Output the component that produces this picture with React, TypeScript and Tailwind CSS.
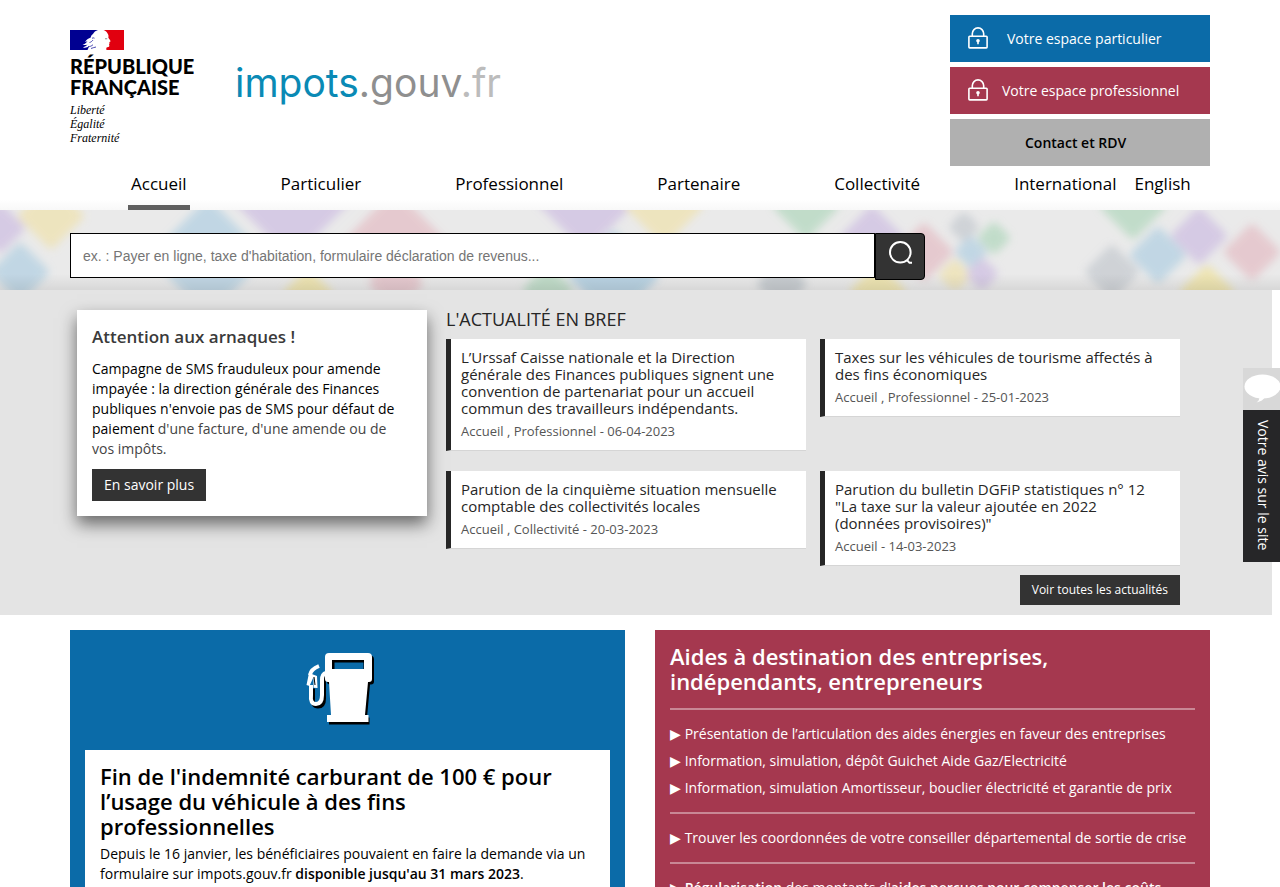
import React from "react";

const navItems = ["Accueil", "Particulier", "Professionnel", "Partenaire", "Collectivité", "International"];

type News = { title: string; meta: string };

const news: News[] = [
  {
    title:
      "L’Urssaf Caisse nationale et la Direction générale des Finances publiques signent une convention de partenariat pour un accueil commun des travailleurs indépendants.",
    meta: "Accueil , Professionnel - 06-04-2023",
  },
  {
    title: "Taxes sur les véhicules de tourisme affectés à des fins économiques",
    meta: "Accueil , Professionnel - 25-01-2023",
  },
  {
    title: "Parution de la cinquième situation mensuelle comptable des collectivités locales",
    meta: "Accueil , Collectivité - 20-03-2023",
  },
  {
    title: 'Parution du bulletin DGFiP statistiques n° 12 "La taxe sur la valeur ajoutée en 2022 (données provisoires)"',
    meta: "Accueil - 14-03-2023",
  },
];

// Soft squares behind the search bar: [cx, cy, half diagonal, colour]
const diamonds: [number, number, number, string][] = [
  [0, 18, 20, "#cfc0e2"],
  [51, 6, 28, "#efe2b0"],
  [20, 62, 24, "#b4d0e2"],
  [208, 32, 38, "#b4d0e2"],
  [292, -12, 56, "#cfc0e2"],
  [395, 34, 48, "#e4bfc6"],
  [208, 62, 38, "#b4d0e2"],
  [308, 84, 20, "#efe2a0"],
  [396, 74, 22, "#e4bfc6"],
  [586, -8, 44, "#cfc0e2"],
  [664, -4, 34, "#efe2b0"],
  [806, -4, 28, "#b4d8bf"],
  [548, 80, 20, "#b4d8bf"],
  [614, 66, 40, "#a9cbe0"],
  [782, 74, 20, "#bcc2c8"],
  [872, 28, 27, "#cfc0e2"],
  [878, 82, 23, "#efe2a0"],
  [924, 42, 24, "#e4bfc6"],
  [964, 17, 10, "#c6cbd0"],
  [994, 28, 11, "#b4d8bf"],
  [971, 42, 11, "#b4d0e2"],
  [955, 65, 11, "#efe2b0"],
  [982, 64, 11, "#cfc0e2"],
  [1133, -4, 28, "#b4d8bf"],
  [1112, 62, 22, "#c6cbd0"],
  [1158, 45, 23, "#b4d0e2"],
  [1199, 26, 23, "#cfc0e2"],
  [1252, 42, 23, "#e4bfc6"],
  [1207, 82, 22, "#efe2a0"],
];

function Lock() {
  return (
    <svg viewBox="0 0 20 22" className="mb-[2px] h-[22px] w-5 shrink-0" fill="none" stroke="#fff" strokeWidth="1.6" aria-hidden="true">
      <rect x="0.9" y="9.3" width="18.2" height="11.6" rx="0.8" />
      <path d="M4.3 9V6.8a5.700 5.900 0 0 1 11.4 0V9" />
      <circle cx="10" cy="13.800" r="1.800" fill="#fff" stroke="none" />
      <path d="M10 14v3.200" />
    </svg>
  );
}

function Flag() {
  return (
    <svg viewBox="0 0 54 20" className="h-5 w-[54px]" aria-hidden="true">
      <path fill="#000091" d="M0 0H28C25.500 .8 24 2 23 4c-1.500 .8-2 2-2.300 3.500-2 .8-4 2-5.700 4.500l2.500-.8c-1.500 1.800-2.800 3-5 3.600 2 .5 3.500 .4 5-.2-1.300 1.500-2.600 2.300-4.500 2.800 2 .5 4 .2 6-.6L17.500 20H0z" />
      <path fill="#e1000f" d="M33.500 0H54v20H36.500c-.3-1.300-.4-2.100 .5-2.800 1.500 .1 2.500-.2 2.300-1.900l-.3-1.300 .8-.9-.7-.9 1.400-.8c.2-1-1.700-2.400-2.200-3.800.5-1.600.2-3.200-1-4.700-.8-1.200-2-2.200-3.800-2.900z" />
      <path fill="none" stroke="#000091" strokeWidth="0.7" d="M18 16.500c2 .2 3.500-.4 5-1.800M19.500 12.500c1.500-.3 2.500-1.300 3.500-2.400M21 18.500c1.500-.3 3-1.300 5-1.500M22 8.200c1-.4 1.800-.4 2.500 0" />
      <path fill="#777" d="M35 8.400h2.200v.8H35z" />
    </svg>
  );
}

function FuelPump() {
  return (
    <svg viewBox="0 0 100 100" className="h-[100px] w-[100px]" aria-hidden="true">
      <g transform="translate(2 2.500)" fill="#000" stroke="#000">
        <path stroke="none" d="M39 13h39q4 0 4 4v22q0 3-3 3h-1l-3 33h2.500v7H37v-7h4L39 42h-1q-3 0-3-3V17q0-4 4-4z" />
        <path fill="none" strokeWidth="4" d="M36 34q-4 1-4 7v15q0 8-6 8t-5-8V46" />
      </g>
      <path fill="#fff" d="M39 13h39q4 0 4 4v22q0 3-3 3h-1l-3 33h3.500v7H37v-7h4L39 42h-1q-3 0-3-3V17q0-4 4-4z" />
      <path fill="#000" d="M42 20h32v9H42z" />
      <path fill="#0b6ba8" d="M44.500 22.500H73.500V29H44.500z" />
      <path fill="none" stroke="#fff" strokeWidth="4" d="M36 33q-4 1-4 7v15q0 9-6 9t-5-9V45" />
      <path fill="none" stroke="#fff" strokeWidth="4" d="M20 35q1-6 9-9" />
      <path fill="#fff" d="M19 33l8 3 .5 12-4-.3V37l-4 9-3-1z" />
      <path fill="none" stroke="#000" strokeWidth="1" d="M24 37l1 8" />
    </svg>
  );
}

function NewsCard({ title, meta }: News) {
  return (
    <article className="border-b border-l-[5px] border-b-[#d5d5d5] border-l-[#262626] bg-white py-[10px] pl-[10px] pr-5">
      <h3 className="text-[15px] leading-[17px]">
        <a href="#" className="text-[#262626]">{title}</a>
      </h3>
      <p className="mt-[5px] text-[13px] leading-[18px] text-[#555]">{meta}</p>
    </article>
  );
}

function AidLink({ children }: { children: React.ReactNode }) {
  return (
    <li className="leading-[27px]">
      <a href="#">▶ {children}</a>
    </li>
  );
}

export default function App() {
  return (
    <div className="h-screen overflow-x-hidden overflow-y-auto bg-white font-['Open_Sans',sans-serif] text-sm leading-5 text-black [scrollbar-width:none]">
      <header className="bg-linear-to-b from-white from-95% to-[#f8f8f8]">
        <div className="mx-auto flex max-w-[1140px] items-start">
          <a href="#" className="mt-[30px] block w-[165px]">
            <Flag />
            <span className="mt-[6px] block font-['Lato',sans-serif] text-[20px] font-black leading-[21px]">
              RÉPUBLIQUE
              <br />
              FRANÇAISE
            </span>
            <span className="mt-[5px] block font-['Liberation_Serif',serif] text-xs italic leading-[14px]">
              Liberté
              <br />
              Égalité
              <br />
              Fraternité
            </span>
          </a>
          <a href="#" className="mt-[56px] font-['Inter',sans-serif] text-[39px] font-normal leading-[54px] text-[#0a8ab5]">
            impots<span className="text-[#8f8f8f]">.gouv</span>
            <span className="text-[#bcbcbc]">.fr</span>
          </a>
          <div className="ml-auto mt-[15px] flex w-[260px] flex-col gap-[5px]">
            <a href="#" className="flex h-[47px] items-center gap-[19px] bg-[#0b6ba8] pl-[18px] text-white">
              <Lock />
              Votre espace particulier
            </a>
            <a href="#" className="flex h-[47px] items-center gap-[14px] bg-[#a5384f] pl-[18px] text-white">
              <Lock />
              Votre espace professionnel
            </a>
            <a href="#" className="flex h-[47px] items-center bg-[#b0b0b0] pl-[75px] font-semibold">
              Contact et RDV
            </a>
          </div>
        </div>
        <nav className="mx-auto flex h-[44px] max-w-[1140px] items-stretch pl-[58px] text-[17px] leading-9" aria-label="Navigation principale">
          <ul className="flex gap-[88px]">
            {navItems.map((item, i) => (
              <li key={item} className={i === 0 ? "border-b-[5px] border-[#606060] px-[3px]" : "px-[3px]"}>
                <a href="#">{item}</a>
              </li>
            ))}
          </ul>
          <a href="#" className="ml-[15px]">English</a>
        </nav>
      </header>

      <div className="relative h-20 overflow-hidden bg-[#eaeaea]">
        <svg className="absolute inset-0 h-full w-full" viewBox="0 0 1280 80" preserveAspectRatio="xMidYMid slice" aria-hidden="true">
          <defs>
            <filter id="soft" x="-20%" y="-20%" width="140%" height="140%">
              <feGaussianBlur stdDeviation="4" />
            </filter>
            <linearGradient id="shade" x1="0" y1="0" x2="0" y2="1">
              <stop offset="0.8" stopColor="#000" stopOpacity="0" />
              <stop offset="1" stopColor="#000" stopOpacity="0.08" />
            </linearGradient>
          </defs>
          <g filter="url(#soft)" opacity="0.75">
            {diamonds.map(([x, y, r, color]) => (
              <path
                key={`${x}-${y}`}
                d={`M${x} ${y - r}L${x + r} ${y}L${x} ${y + r}L${x - r} ${y}Z`}
                fill={color}
                stroke={color}
                strokeWidth="9"
                strokeLinejoin="round"
              />
            ))}
          </g>
          <rect width="1280" height="80" fill="url(#shade)" />
        </svg>
        <div className="relative mx-auto max-w-[1140px] pt-[23px]">
          <form className="flex w-3/4 items-start" onSubmit={(e) => e.preventDefault()}>
            <input
              type="search"
              aria-label="Rechercher"
              placeholder="ex. : Payer en ligne, taxe d'habitation, formulaire déclaration de revenus..."
              className="h-[45px] min-w-0 grow border border-black bg-white px-3 font-['Liberation_Sans',sans-serif] text-sm placeholder:text-[#757575]"
            />
            <button
              type="submit"
              aria-label="Lancer la recherche"
              className="flex h-[47px] w-[50px] shrink-0 justify-center rounded-r-[4px] border border-black bg-[#333] pt-[7px]"
            >
              <svg viewBox="0 0 24 24" className="h-6 w-6" fill="none" stroke="#fff" strokeWidth="2" aria-hidden="true">
                <circle cx="12.300" cy="11.300" r="10.300" />
                <path d="M18.800 18.800L21.500 21.800H24" />
              </svg>
            </button>
          </form>
        </div>
      </div>

      <section className="mr-2 bg-[#e4e4e4] pb-[10px] pt-5">
        <div className="mx-auto flex max-w-[1132px] items-start">
          <aside className="ml-[7px] w-[350px] shrink-0 bg-white p-[15px] shadow-[0_8px_16px_rgba(0,0,0,0.55)]">
            <h2 className="text-[17px] font-semibold leading-6 text-[#3a3a3a]">Attention aux arnaques !</h2>
            <p className="mt-[10px] text-[#444]">
              <span className="text-black">
                Campagne de SMS frauduleux pour amende impayée : la direction générale des Finances publiques n'envoie pas de SMS pour
                défaut de paiement
              </span>{" "}
              d'une facture, d'une amende ou de vos impôts.
            </p>
            <a href="#" className="mt-[10px] inline-block bg-[#333] px-3 py-[6px] text-white">
              En savoir plus
            </a>
          </aside>
          <div className="ml-[19px] mr-[22px] grow">
            <h2 className="text-lg leading-[18px] text-[#262626]">L'ACTUALITÉ EN BREF</h2>
            <div className="mt-[11px] grid grid-cols-2 items-start gap-x-[14px] gap-y-5">
              {news.map((n) => (
                <NewsCard key={n.title} {...n} />
              ))}
            </div>
            <div className="mt-[9px] flex justify-end">
              <a href="#" className="bg-[#333] px-3 py-[5px] text-xs leading-5 text-white">
                Voir toutes les actualités
              </a>
            </div>
          </div>
        </div>
      </section>

      <main className="mx-auto grid max-w-[1140px] grid-cols-2 gap-[30px] pt-[15px]">
        <section className="bg-[#0b6ba8] px-[15px] pb-[15px]">
          <div className="flex h-[120px] justify-center pr-[15px] pt-[10px]">
            <FuelPump />
          </div>
          <div className="bg-white px-[15px] pb-[15px] pt-[14px]">
            <h2 className="text-[22px] font-semibold leading-[25px]">
              Fin de l'indemnité carburant de 100 € pour l’usage du véhicule à des fins
              <br />
              professionnelles
            </h2>
            <p className="mt-[5px]">
              Depuis le 16 janvier, les bénéficiaires pouvaient en faire la demande via un formulaire sur impots.gouv.fr{" "}
              <strong className="font-semibold">disponible jusqu'au 31 mars 2023</strong>.
            </p>
          </div>
        </section>
        <section className="bg-[#a5384f] px-[15px] pb-[15px] pt-[14px] text-white">
          <h2 className="text-[22px] font-semibold leading-[25px]">
            Aides à destination des entreprises,
            <br />
            indépendants, entrepreneurs
          </h2>
          <hr className="mb-[10px] mt-[14px] border-t-2 border-white/40" />
          <ul>
            <AidLink>Présentation de l’articulation des aides énergies en faveur des entreprises</AidLink>
            <AidLink>Information, simulation, dépôt Guichet Aide Gaz/Electricité</AidLink>
            <AidLink>Information, simulation Amortisseur, bouclier électricité et garantie de prix</AidLink>
          </ul>
          <hr className="mb-[10px] mt-[11px] border-t-2 border-white/40" />
          <ul>
            <AidLink>Trouver les coordonnées de votre conseiller départemental de sortie de crise</AidLink>
          </ul>
          <hr className="mb-[10px] mt-[11px] border-t-2 border-white/40" />
          <ul>
            <AidLink>
              <strong className="font-semibold">Régularisation</strong> des montants d'
              <strong className="font-semibold">aides perçues pour compenser les coûts</strong>
            </AidLink>
          </ul>
        </section>
      </main>

      <a href="#" className="fixed right-0 top-[368px] w-[37px] bg-[#262628] text-white">
        <span className="flex h-[42px] items-center justify-end bg-[#d8d8d8]">
          <svg viewBox="0 0 36 30" className="h-[30px] w-9" aria-hidden="true">
            <ellipse cx="18.500" cy="12.500" rx="18" ry="12" fill="#fff" />
            <path d="M15 23q1 3-2.500 5.500Q19 27 21 23z" fill="#fff" />
          </svg>
        </span>
        <span className="block h-[152px] w-[37px] pt-[10px] leading-[33px] [writing-mode:vertical-rl]">Votre avis sur le site</span>
      </a>
    </div>
  );
}
